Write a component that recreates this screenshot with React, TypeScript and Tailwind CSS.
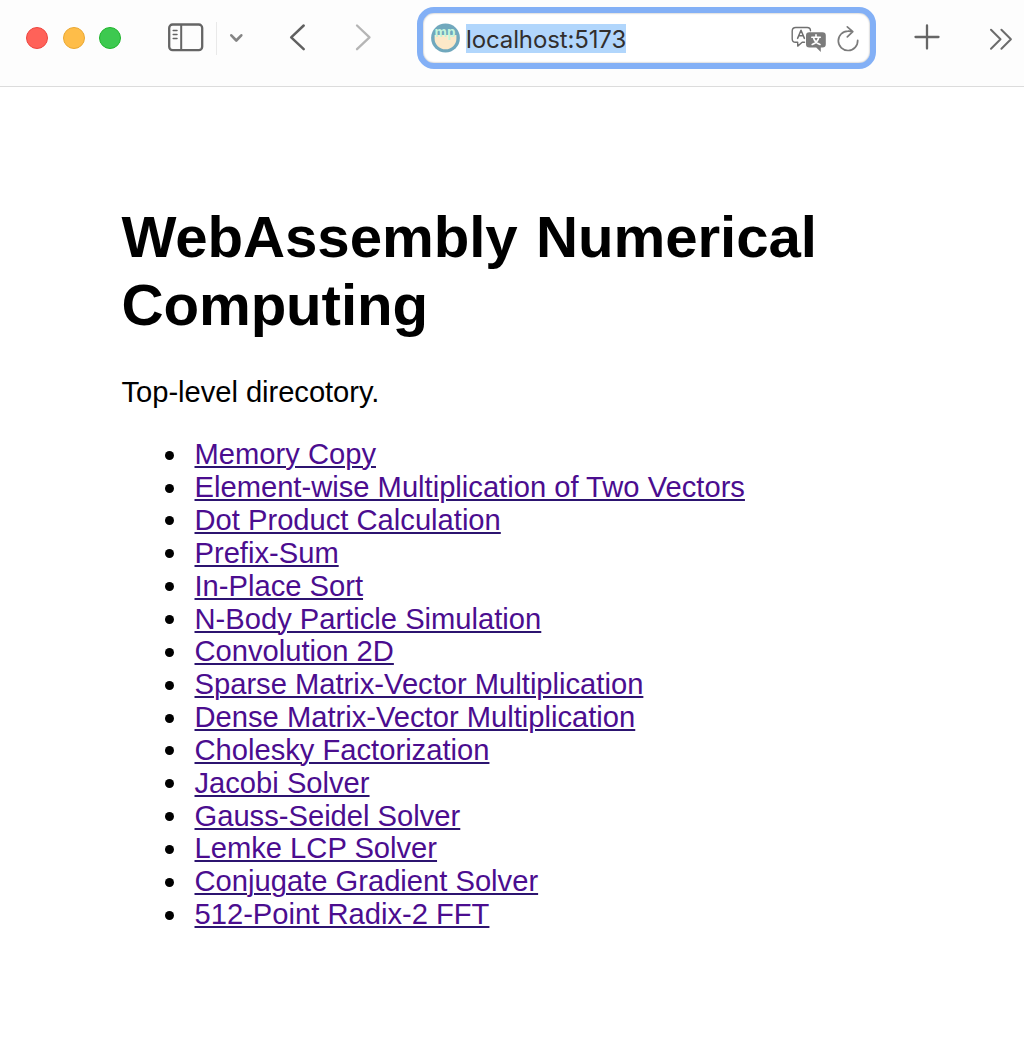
const links: string[] = [
  'Memory Copy',
  'Element-wise Multiplication of Two Vectors',
  'Dot Product Calculation',
  'Prefix-Sum',
  'In-Place Sort',
  'N-Body Particle Simulation',
  'Convolution 2D',
  'Sparse Matrix-Vector Multiplication',
  'Dense Matrix-Vector Multiplication',
  'Cholesky Factorization',
  'Jacobi Solver',
  'Gauss-Seidel Solver',
  'Lemke LCP Solver',
  'Conjugate Gradient Solver',
  '512-Point Radix-2 FFT',
];

function SidebarIcon() {
  return (
    <svg className="block shrink-0" width="36" height="29" viewBox="0 0 36 29" fill="none" stroke="#656565">
      <rect x="1.2" y="1.5" width="33" height="25.6" rx="3.4" strokeWidth="2.3" />
      <path d="M13.2 1v26" strokeWidth="2" />
      <path d="M5.2 7.6h3.8M5.2 11.6h3.8M5.2 15.6h3.8" strokeWidth="1.5" strokeLinecap="round" />
    </svg>
  );
}

function TranslateIcon() {
  return (
    <svg className="block shrink-0" width="36" height="27" viewBox="0 0 36 27" fill="none">
      <path
        d="M13.5 16.3h-2.3l-4.500 3.800v-3.800H4.600A3.400 3.400 0 0 1 1.200 13V5A3.600 3.600 0 0 1 4.800 1.500h11.400A3.300 3.300 0 0 1 19.500 4.800"
        stroke="#707070"
        strokeWidth="1.4"
        strokeLinecap="round"
        strokeLinejoin="round"
      />
      <path d="M6.600 12.400 10 4.200l3.400 8.200M7.800 9.700h4.500" stroke="#707070" strokeWidth="1.500" strokeLinecap="round" strokeLinejoin="round" />
      <path
        d="M18.300 6.300h13.200a3.300 3.300 0 0 1 3.300 3.300v8.600a3.300 3.300 0 0 1-3.300 3.300h-1.700V26l-4.600-4.500h-6.900a3.300 3.300 0 0 1-3.300-3.300V9.600a3.300 3.300 0 0 1 3.300-3.300Z"
        fill="#7b7b7b"
      />
      <path d="M25 8.800v2M20.800 11.200h8.500M27.700 11.500c-.6 3.400-2.800 5.600-6.500 7M22.500 11.500c.6 3.400 2.800 5.600 6.500 7" stroke="#fff" strokeWidth="1.600" strokeLinecap="round" />
    </svg>
  );
}

function SiteIcon() {
  return (
    <svg className="block shrink-0" width="29" height="30" viewBox="0 0 29 30" fill="none">
      <circle cx="14.500" cy="15" r="14.400" fill="#70a8bd" />
      <path d="M3.600 12h21.800v3.700a10.900 10.600 0 0 1-21.800 0Z" fill="#fce8c8" />
      <text
        x="3.600"
        y="13.500"
        textLength="20.800"
        lengthAdjust="spacingAndGlyphs"
        fill="#c4f6dc"
        className="font-['Liberation_Sans',sans-serif] text-[14px] font-bold"
      >
        mp
      </text>
    </svg>
  );
}

function Toolbar() {
  return (
    <header className="flex h-[87px] shrink-0 items-start border-b border-[#dcdcdc] bg-[#fdfdfd]">
      <div className="mt-[27px] ml-[26px] flex gap-[14.500px]">
        <span className="size-[22px] rounded-full border border-[#ee453f] bg-[#ff6259]" />
        <span className="size-[22px] rounded-full border border-[#eaa832] bg-[#febd49]" />
        <span className="size-[22px] rounded-full border border-[#1fb52c] bg-[#3dc950]" />
      </div>
      <div className="mt-[23px] ml-[47px] flex">
        <SidebarIcon />
      </div>
      <span className="mt-[22px] ml-[12px] h-[33px] w-px bg-[#e9e9e9]" />
      <svg className="mt-[33px] ml-[12px] block shrink-0" width="16" height="11" viewBox="0 0 16 11" fill="none">
        <path d="m2.300 2.300 5 5.200 5-5.200" stroke="#848484" strokeWidth="2.600" strokeLinecap="round" strokeLinejoin="round" />
      </svg>
      <svg className="mt-[23px] ml-[43px] block shrink-0" width="20" height="29" viewBox="0 0 20 29" fill="none">
        <path d="M15.700 2.500 3.200 14.400l12.500 11.800" stroke="#606060" strokeWidth="2.500" strokeLinecap="round" strokeLinejoin="round" />
      </svg>
      <svg className="mt-[23px] ml-[45px] block shrink-0" width="20" height="29" viewBox="0 0 20 29" fill="none">
        <path d="m4 2.500 12.500 11.900L4 26.200" stroke="#b5b5b5" strokeWidth="2.300" strokeLinecap="round" strokeLinejoin="round" />
      </svg>
      <div className="mt-[7px] ml-[44px] flex h-[62px] w-[459px] shrink-0 items-start rounded-[17px] border-[6px] border-[#83b0f6] bg-white shadow-[inset_0_0_2px_#999]">
        <div className="mt-[10px] ml-[8px]">
          <SiteIcon />
        </div>
        <span className="mt-[11px] ml-[6px] h-[29px] w-[160px] bg-[#b1d6fc] font-['Inter',sans-serif] text-[24px] leading-[31px] tracking-[-0.120px] whitespace-nowrap text-[#322f2d]">
          localhost:5173
        </span>
        <div className="mt-[13px] ml-[165px]">
          <TranslateIcon />
        </div>
        <svg className="mt-[12px] ml-[9px] block shrink-0" width="24" height="28" viewBox="0 0 24 28" fill="none" stroke="#7b7b7b" strokeWidth="1.700" strokeLinecap="round" strokeLinejoin="round">
          <path d="M21.700 15.300A9.700 9.700 0 1 1 12 6.100c1.600-.1 3 .1 4.300.5M11.300 1.900l5.500 4.700-5.500 5.200" />
        </svg>
      </div>
      <svg className="mt-[24px] ml-[38px] block shrink-0" width="26" height="26" viewBox="0 0 26 26" fill="none">
        <path d="M13 1.500v23M1.500 13h23" stroke="#666" strokeWidth="2.300" strokeLinecap="round" />
      </svg>
      <svg className="mt-[27px] ml-[49px] block shrink-0" width="24" height="24" viewBox="0 0 24 24" fill="none">
        <path d="m2 2.700 9.500 9.500L2 21.700M12.400 2.700l9.500 9.500-9.500 9.500" stroke="#6c6c6c" strokeWidth="2" strokeLinecap="round" strokeLinejoin="round" />
      </svg>
    </header>
  );
}

export default function App() {
  return (
    <div className="flex h-[1045px] w-[1024px] flex-col overflow-hidden bg-white font-['Liberation_Sans',sans-serif] text-[29.160px] leading-[32.850px] text-black">
      <Toolbar />
      <main className="pt-[116px] pl-[121.500px]">
        <h1 className="text-[58.250px] leading-[67.500px] font-bold tracking-[-0.100px] [word-spacing:2.500px]">
          WebAssembly Numerical
          <br />
          Computing
        </h1>
        <p className="mt-[38px] tracking-[-0.040px]">Top-level direcotory.</p>
        <ul className="mt-[29.500px] pl-[43.500px]">
          {links.map((label) => (
            <li key={label} className="flex items-center">
              <span className="mt-[1px] mr-[20.500px] size-[9px] shrink-0 rounded-full bg-black" />
              <a href="#" className="text-[#4b0d8f] underline decoration-[#2c1470] decoration-[1.500px] underline-offset-[2px]">
                {label}
              </a>
            </li>
          ))}
        </ul>
      </main>
    </div>
  );
}
